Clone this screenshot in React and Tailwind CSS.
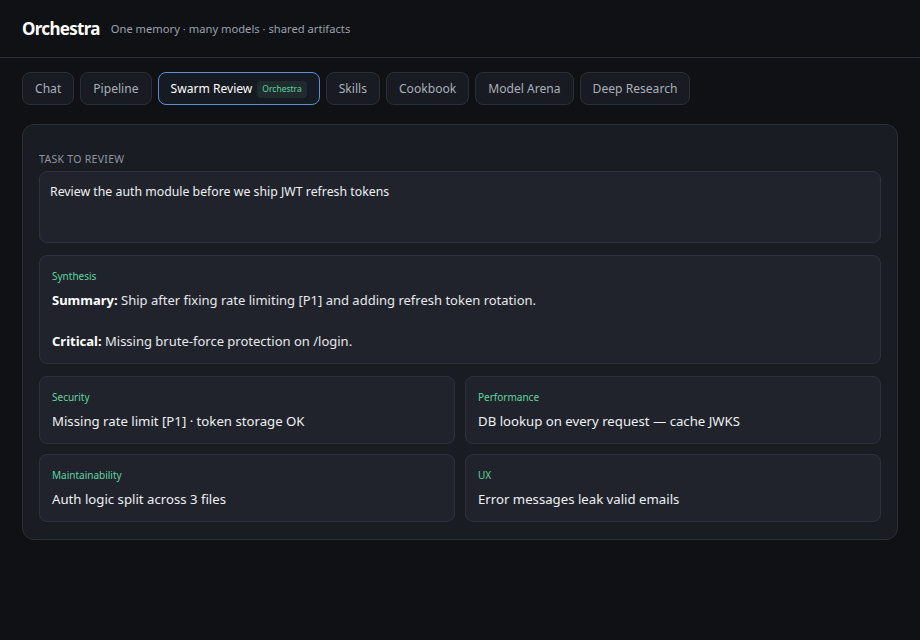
const tabs = ['Chat', 'Pipeline', 'Swarm Review', 'Skills', 'Cookbook', 'Model Arena', 'Deep Research'];

const findings = [
  { area: 'Security', text: 'Missing rate limit [P1] · token storage OK' },
  { area: 'Performance', text: 'DB lookup on every request — cache JWKS' },
  { area: 'Maintainability', text: 'Auth logic split across 3 files' },
  { area: 'UX', text: 'Error messages leak valid emails' },
];

const App = () => {
  return (
    <div className="min-h-screen bg-[#0f1115] text-[#e6e8ec] font-['Noto_Sans','Open_Sans',sans-serif]">
      <header className="flex items-center h-[58px] px-[22px] border-b border-[#2a2d34]">
        <h1 className="text-[17px] font-bold text-white tracking-[-0.7px]">Orchestra</h1>
        <span className="ml-[11px] mt-[2px] text-[11.2px] text-[#9aa1ad]">One memory · many models · shared artifacts</span>
      </header>

      <div className="px-[22px] pt-[14px]">
        <nav className="flex gap-[6px]">
          {tabs.map((t) => {
            const active = t === 'Swarm Review';
            return (
              <button
                key={t}
                className={
                  active
                    ? 'flex items-center gap-[5px] h-[33px] px-3 pt-[2px] rounded-lg border border-[#5b8fd6] bg-[#161a22] text-[12.1px] text-white'
                    : 'flex items-center h-[33px] px-3 pt-[2px] rounded-lg border border-[#2a2e37] bg-[#181b21] text-[12.1px] text-[#a9b0bb]'
                }
              >
                {t}
                {active && (
                  <span className="px-[5px] py-[2px] rounded bg-[#1f2b2d] text-[8.5px] text-[#5fd3a0]">Orchestra</span>
                )}
              </button>
            );
          })}
        </nav>

        <main className="mt-[19px] rounded-xl border border-[#2a2e37] bg-[#191c23] px-4 pt-[27px] pb-[17px]">
          <div className="text-[10.5px] uppercase tracking-[0.3px] text-[#8e95a1]">Task to review</div>
          <div className="mt-[3px] h-[72px] rounded-lg border border-[#2c313b] bg-[#20232b] px-[10px] pt-[11px] text-[12.3px] text-[#eef0f3]">
            Review the auth module before we ship JWT refresh tokens
          </div>

          <section className="mt-3 rounded-lg border border-[#2c313b] bg-[#20232b] px-3 pt-[13px] pb-[12px]">
            <div className="text-[10px] text-[#5fd3a0]">Synthesis</div>
            <p className="mt-[6px] text-[13px] leading-[20px]">
              <b className="text-white">Summary:</b> Ship after fixing rate limiting [P1] and adding refresh token rotation.
            </p>
            <p className="mt-[21px] text-[13px] leading-[20px]">
              <b className="text-white">Critical:</b> Missing brute-force protection on /login.
            </p>
          </section>

          <div className="mt-3 grid grid-cols-2 gap-[10px]">
            {findings.map((f) => (
              <div key={f.area} className="h-[68px] rounded-lg border border-[#2c313b] bg-[#20232b] px-3 pt-[13px]">
                <div className="text-[10px] text-[#5fd3a0]">{f.area}</div>
                <div className="mt-[7px] text-[13.2px] text-[#eef0f3]">{f.text}</div>
              </div>
            ))}
          </div>
        </main>
      </div>
    </div>
  );
};

export default App;
